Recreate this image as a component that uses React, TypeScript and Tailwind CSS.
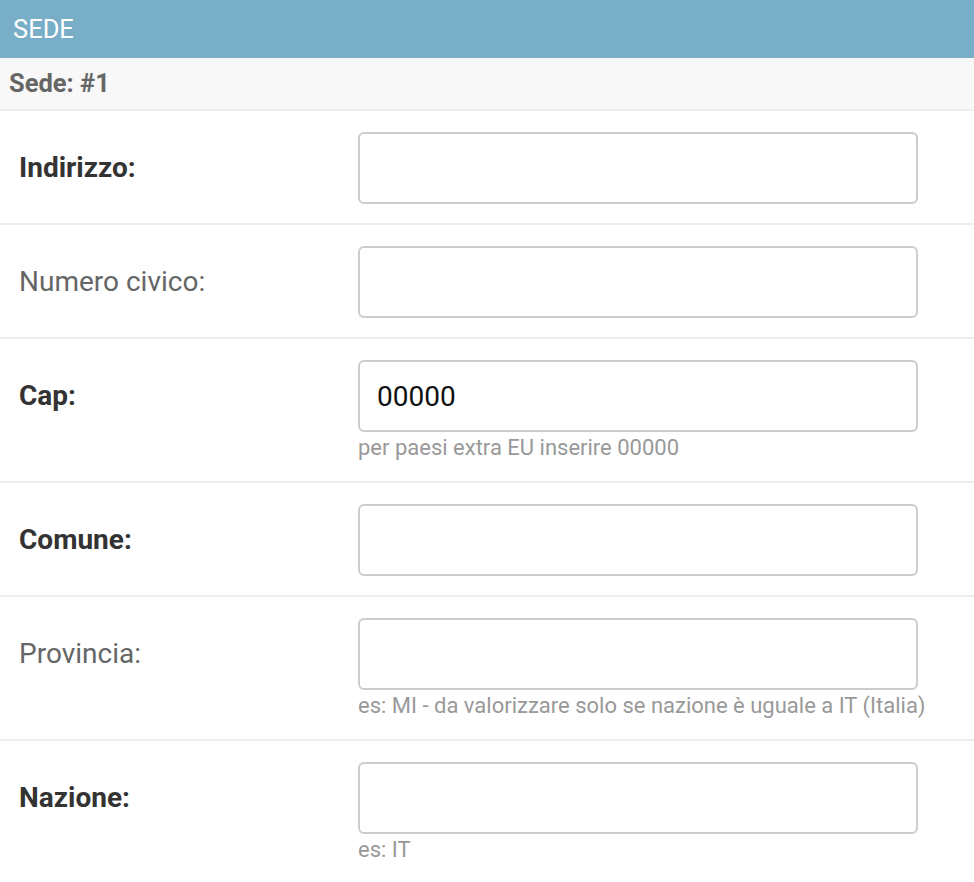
const FONT = { fontFamily: 'Roboto, "Noto Sans", sans-serif' }

type Field = {
    label: string
    required?: boolean
    value?: string
    help?: string
}

const fields: Field[] = [
    { label: 'Indirizzo:', required: true },
    { label: 'Numero civico:' },
    { label: 'Cap:', required: true, value: '00000', help: 'per paesi extra EU inserire 00000' },
    { label: 'Comune:', required: true },
    { label: 'Provincia:', help: 'es: MI - da valorizzare solo se nazione è uguale a IT (Italia)' },
    { label: 'Nazione:', required: true, help: 'es: IT' },
]

function Row({ field }: { field: Field }) {
    return (
        <div className="flex flex-row border-b-2 border-[#eeeeee] pt-[21px] pb-[19px]">
            <div className="w-[358px] shrink-0 pl-[19px] h-[72px] flex items-center">
                <span
                    className={
                        field.required
                            ? 'text-[28px] font-bold text-[#333333]'
                            : 'text-[28px] text-[#666666]'
                    }
                >
                    {field.label}
                </span>
            </div>
            <div className="flex flex-col">
                <input
                    type="text"
                    defaultValue={field.value ?? ''}
                    className="w-[560px] h-[72px] rounded-[6px] border-2 border-[#cccccc] px-[17px] text-[28px] text-[#111111] outline-none bg-white"
                    style={FONT}
                />
                {field.help && (
                    <div className="text-[22px] text-[#999999] mt-[2px] leading-[28px]">
                        {field.help}
                    </div>
                )}
            </div>
        </div>
    )
}

export default function App() {
    return (
        <div className="w-[974px] h-[882px] overflow-hidden bg-white" style={FONT}>
            <div className="h-[58px] bg-[#79aec8] flex items-center pl-[13px]">
                <h2 className="text-white text-[25.5px]">SEDE</h2>
            </div>
            <div className="h-[53px] bg-[#f8f8f8] border-b-2 border-[#eeeeee] flex items-center pl-[9px]">
                <h3 className="text-[#666666] font-bold text-[25.5px]">Sede: #1</h3>
            </div>
            {fields.map((f, i) => (
                <Row key={i} field={f} />
            ))}
        </div>
    )
}
